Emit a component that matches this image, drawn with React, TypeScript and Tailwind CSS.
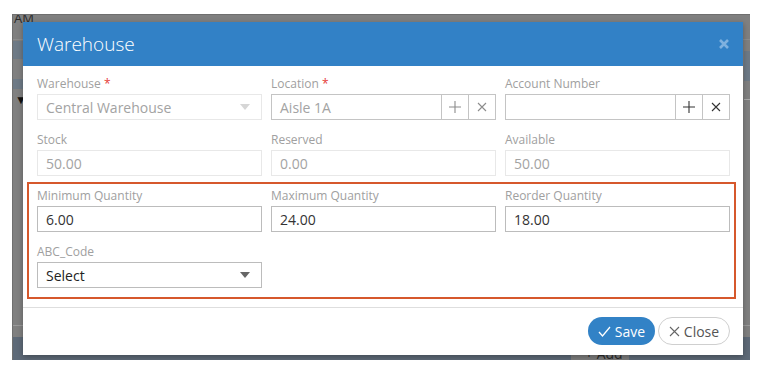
import React from 'react';

const font = { fontFamily: '"Open Sans", "Noto Sans", sans-serif' };

function Label({ text, required }: { text: string; required?: boolean }) {
  return (
    <div className="h-[18px] text-[12px] leading-[16px] text-[#a0a0a0]">
      {text}
      {required && <span className="text-[#e53935]"> *</span>}
    </div>
  );
}

function ReadOnly({ value, arrow }: { value: string; arrow?: boolean }) {
  return (
    <div className="flex h-[26px] items-center justify-between border border-[#e8e8e8] px-[8px] text-[14px] text-[#a3a3a3]">
      <span>{value}</span>
      {arrow && (
        <svg width="10" height="6" viewBox="0 0 10 6" className="mr-[3px]">
          <path d="M0 0h10L5 6z" fill="#d6d6d6" />
        </svg>
      )}
    </div>
  );
}

function Editable({ value }: { value: string }) {
  return (
    <div className="flex h-[26px] items-center border border-[#bcbcbc] px-[8px] text-[14px] text-[#333]">
      {value}
    </div>
  );
}

function Lookup({ value, dark }: { value: string; dark?: boolean }) {
  const stroke = dark ? '#333' : '#8c8c8c';
  return (
    <div className="flex h-[26px] border border-[#c4c4c4] text-[14px]">
      <div className="flex flex-1 items-center px-[8px] text-[#a3a3a3]">{value}</div>
      <div className="flex w-[27px] items-center justify-center border-l border-[#c4c4c4]">
        <svg width="12" height="12" viewBox="0 0 12 12">
          <path d="M6 0v12M0 6h12" stroke={stroke} strokeWidth="1.1" />
        </svg>
      </div>
      <div className="flex w-[27px] items-center justify-center border-l border-[#c4c4c4]">
        <svg width="10" height="10" viewBox="0 0 10 10">
          <path d="M1 1l8 8M9 1l-8 8" stroke={stroke} strokeWidth="1.1" />
        </svg>
      </div>
    </div>
  );
}

export default function App() {
  return (
    <div className="h-[371px] w-[760px] bg-white pl-[12px] pt-[14px]" style={font}>
      {/* page behind the dialog */}
      <div className="relative h-[346px] w-[738px] overflow-hidden border-l border-t border-[#6f6f6f] bg-[#808080]">
        <div className="absolute left-[1px] top-[-6px] text-[13px] text-[#2a2a2a]">AM</div>
        <div className="absolute left-0 top-[24px] h-[1px] w-full bg-[#8d8d8d]" />
        <div className="absolute left-0 top-[26px] h-[18px] w-[12px] bg-[#6e7a86]" />
        <div className="absolute left-0 top-[64px] h-[10px] w-[12px] bg-[#6e7a86]" />
        <div className="absolute left-[2px] top-[76px] text-[12px] text-[#111]">▼</div>
        <div className="absolute left-0 top-[310px] h-[1px] w-full bg-[#9a9a9a]" />
        <div className="absolute bottom-0 left-0 h-[23px] w-full bg-[#5e6a78]" />
        <div className="absolute bottom-[0px] left-[558px] h-[14px] w-[58px] rounded-t-[3px] bg-[#7d7d7d] pl-[14px] text-[14px] leading-[16px] text-[#2a2a2a]">+ Add</div>
        <div className="absolute right-0 top-[36px] h-[30px] w-[6px] bg-[#6e7a86]" />
        <div className="absolute right-0 top-[84px] h-[1px] w-[6px] bg-[#aaa]" />

        {/* dialog */}
        <div className="absolute left-[10px] top-[7px] flex h-[333px] w-[720px] flex-col bg-white shadow-[0_2px_6px_rgba(0,0,0,0.3)]">
          <div className="flex h-[44px] items-center justify-between bg-[#3281c6] pl-[14px] pr-[14px]">
            <span className="text-[19px] font-light text-white">Warehouse</span>
            <svg width="10" height="10" viewBox="0 0 10 10">
              <path d="M1 1l8 8M9 1l-8 8" stroke="#7fb1df" strokeWidth="2.6" />
            </svg>
          </div>

          <div className="flex flex-col pl-[14px] pr-[13px] pt-[10px]">
            <div className="grid grid-cols-3 gap-x-[9px]">
              <div>
                <Label text="Warehouse" required />
                <ReadOnly value="Central Warehouse" arrow />
              </div>
              <div>
                <Label text="Location" required />
                <Lookup value="Aisle 1A" />
              </div>
              <div>
                <Label text="Account Number" />
                <Lookup value="" dark />
              </div>
            </div>

            <div className="mt-[12px] grid grid-cols-3 gap-x-[9px]">
              <div>
                <Label text="Stock" />
                <ReadOnly value="50.00" />
              </div>
              <div>
                <Label text="Reserved" />
                <ReadOnly value="0.00" />
              </div>
              <div>
                <Label text="Available" />
                <ReadOnly value="50.00" />
              </div>
            </div>

            <div className="ml-[-10px] mr-[-6px] mt-[6px] border-2 border-[#d6582c] pb-[9px] pl-[8px] pr-[4px] pt-[4px]">
              <div className="grid grid-cols-3 gap-x-[9px]">
                <div>
                  <Label text="Minimum Quantity" />
                  <Editable value="6.00" />
                </div>
                <div>
                  <Label text="Maximum Quantity" />
                  <Editable value="24.00" />
                </div>
                <div>
                  <Label text="Reorder Quantity" />
                  <Editable value="18.00" />
                </div>
              </div>
              <div className="mt-[12px] grid grid-cols-3 gap-x-[9px]">
                <div>
                  <Label text="ABC_Code" />
                  <div className="flex h-[26px] items-center justify-between border border-[#bcbcbc] px-[8px] text-[14px] text-[#222]">
                    <span>Select</span>
                    <svg width="10" height="6" viewBox="0 0 10 6" className="mr-[3px]">
                      <path d="M0 0h10L5 6z" fill="#666" />
                    </svg>
                  </div>
                </div>
              </div>
            </div>
          </div>

          <div className="mt-[8px] h-[1px] w-full bg-[#dedede]" />

          <div className="flex justify-end gap-[3px] pr-[13px] pt-[9px]">
            <div className="flex h-[28px] w-[67px] items-center justify-center gap-[4px] rounded-[14px] bg-[#3282c6] text-[14px] text-white">
              <svg width="13" height="11" viewBox="0 0 13 11">
                <path d="M1 6l3.5 4L12 1" stroke="white" strokeWidth="1.3" fill="none" />
              </svg>
              <span>Save</span>
            </div>
            <div className="flex h-[28px] w-[72px] items-center justify-center gap-[4px] rounded-[14px] border border-[#cfcfcf] bg-white text-[14px] text-[#555]">
              <svg width="11" height="11" viewBox="0 0 11 11">
                <path d="M1 1l9 9M10 1l-9 9" stroke="#666" strokeWidth="1.1" />
              </svg>
              <span>Close</span>
            </div>
          </div>
        </div>
      </div>
    </div>
  );
}
